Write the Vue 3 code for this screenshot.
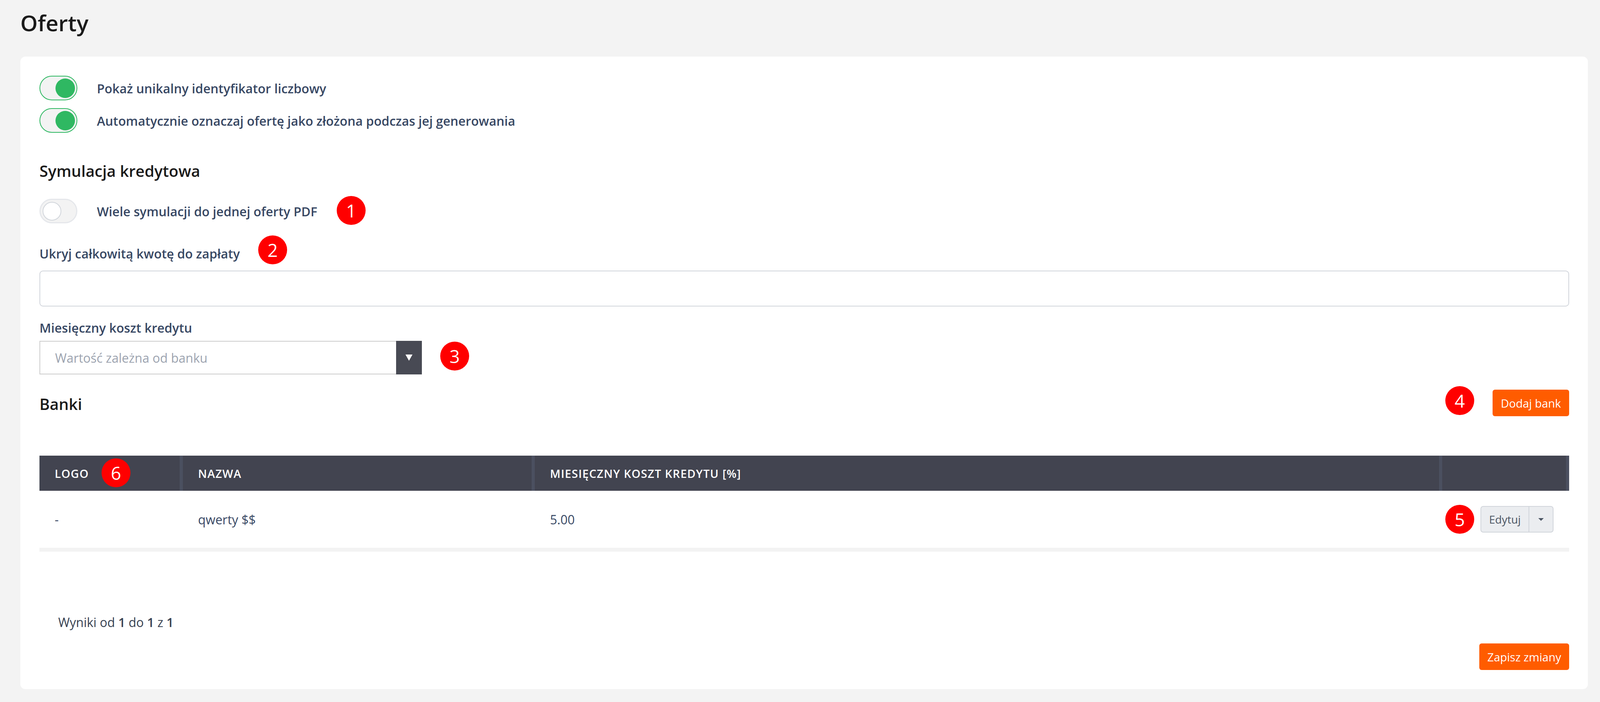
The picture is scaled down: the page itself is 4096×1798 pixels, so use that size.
<script setup>
const toggles = [
  { id: 1, label: 'Pokaż unikalny identyfikator liczbowy' },
  { id: 2, label: 'Automatycznie oznaczaj ofertę jako złożona podczas jej generowania' },
]
const badges = [1, 2, 3, 4, 5, 6]
</script>

<template>
  <div class="page">
    <header class="head"><h1>Oferty</h1></header>
    <main class="card">
      <div class="toggles">
        <div v-for="t in toggles" :key="t.id" class="row">
          <span class="toggle on"><i></i></span>
          <span class="label">{{ t.label }}</span>
        </div>
      </div>
      <h2 class="sim">Symulacja kredytowa</h2>
      <div class="row">
        <span class="toggle off"><i></i></span>
        <span class="label">Wiele symulacji do jednej oferty PDF</span>
      </div>
      <div class="label field-a">Ukryj całkowitą kwotę do zapłaty</div>
      <div class="input"></div>
      <div class="label field-b">Miesięczny koszt kredytu</div>
      <div class="select">
        <span class="placeholder">Wartość zależna od banku</span>
        <span class="handle"><i></i></span>
      </div>
      <div class="banks">
        <h2>Banki</h2>
        <button class="btn">Dodaj bank</button>
      </div>
      <div class="table">
        <div class="th">Logo</div>
        <div class="th">Nazwa</div>
        <div class="th">Miesięczny koszt kredytu [%]</div>
        <div class="th"></div>
        <div class="td">-</div>
        <div class="td">qwerty $$</div>
        <div class="td">5.00</div>
        <div class="td actions">
          <div class="group">
            <span class="edit">Edytuj</span>
            <span class="more"><i></i></span>
          </div>
        </div>
      </div>
      <div class="results">Wyniki od <b>1</b> do <b>1</b> z <b>1</b></div>
      <div class="foot"><button class="btn save">Zapisz zmiany</button></div>
      <span v-for="n in badges" :key="n" class="badge" :class="'b' + n">{{ n }}</span>
    </main>
  </div>
</template>

<style>
html, body { margin: 0; background: #f3f3f3; }
</style>

<style scoped>
.page {
  box-sizing: border-box;
  height: 1798px;
  padding: 0 31px 33px 52px;
  background: #f3f3f3;
  font-family: "Open Sans", "Noto Sans", sans-serif;
  color: #374151;
}
.head { height: 145px; display: flex; align-items: flex-start; }
h1 { margin: 23px 0 0; font-size: 56.5px; line-height: 72px; font-weight: 600; color: #1a1a1a; }
.card {
  position: relative;
  box-sizing: border-box;
  height: 1620px;
  padding: 49px 48px 49px 49px;
  background: #fff;
  border-radius: 13px;
}
.toggles { display: flex; flex-direction: column; gap: 20px; }
.row { display: flex; align-items: center; height: 63px; }
.toggle {
  position: relative;
  box-sizing: border-box;
  width: 97px;
  height: 63px;
  margin-right: 50px;
  border-radius: 32px;
  background: #f3f3f3;
  flex: none;
}
.toggle i { position: absolute; border-radius: 50%; }
.toggle.on { border: 2px solid #2fb862; }
.toggle.on i { width: 50px; height: 50px; right: 4px; top: 5px; background: #2fb862; }
.toggle.off { border: 3px solid #e5e7eb; }
.toggle.off i { box-sizing: border-box; width: 48px; height: 48px; left: 5px; top: 5px; background: #fff; border: 2px solid #d1d5db; }
.label { font-size: 32.3px; line-height: 50px; font-weight: 600; color: #374763; }
h2 { margin: 0; font-size: 40px; line-height: 52px; font-weight: 600; color: #1a1a1a; }
.sim { margin: 72px 0 45px; }
.field-a { margin: 52px 0 19px; }
.field-b { margin: 29px 0 9px; }
.input {
  box-sizing: border-box;
  height: 92px;
  border: 2px solid #d1d5db;
  border-radius: 9px;
}
.select {
  box-sizing: border-box;
  display: flex;
  align-items: center;
  width: 979px;
  height: 86px;
  padding-left: 38px;
  border: 2px solid #ccc;
  border-right: 0;
  position: relative;
}
.placeholder { font-size: 32px; color: #9ca3af; }
.handle {
  position: absolute;
  right: 0;
  top: -2px;
  bottom: -2px;
  width: 66px;
  background: #484a54;
  display: flex;
  align-items: center;
  justify-content: center;
}
.handle i {
  width: 0;
  height: 0;
  border-left: 9px solid transparent;
  border-right: 9px solid transparent;
  border-top: 16px solid #fff;
}
.banks { display: flex; justify-content: space-between; align-items: flex-start; margin-top: 39px; }
.banks h2 { margin-top: 11px; }
.btn {
  height: 68px;
  padding: 0;
  width: 196px;
  border: 0;
  border-radius: 6px;
  background: #ff5c00;
  color: #fff;
  font-family: inherit;
  font-size: 29px;
  font-weight: 400;
}
.table {
  display: grid;
  grid-template-columns: 367px 901px 2323px 325px;
  margin-top: 101px;
  border-bottom: 10px solid #f3f3f3;
}
.th {
  box-sizing: border-box;
  height: 90px;
  display: flex;
  align-items: center;
  padding-left: 39px;
  background: #424450;
  border-right: 8px solid #4b5060;
  color: #fff;
  font-size: 29px;
  font-weight: 600;
  text-transform: uppercase;
  letter-spacing: 1.25px;
}
.td {
  box-sizing: border-box;
  height: 146px;
  display: flex;
  align-items: center;
  padding-left: 39px;
  font-size: 32px;
  color: #374763;
}
.actions { justify-content: flex-end; padding: 0 40px 0 0; }
.group {
  box-sizing: border-box;
  display: flex;
  width: 187px;
  height: 68px;
  background: #ebedf0;
  border: 2px solid #d1d5db;
  border-radius: 7px;
}
.edit {
  width: 121px;
  display: flex;
  align-items: center;
  justify-content: center;
  font-size: 28px;
  color: #4b5563;
  border-right: 2px solid #d1d5db;
}
.more { flex: 1; display: flex; align-items: center; justify-content: center; }
.more i {
  width: 0;
  height: 0;
  border-left: 7px solid transparent;
  border-right: 7px solid transparent;
  border-top: 7px solid #4b5563;
}
.results { margin: 156px 0 0 48px; font-size: 32px; line-height: 50px; color: #374151; }
.results b { font-weight: 600; }
.foot { display: flex; justify-content: flex-end; margin-top: 29px; }
.save { width: 230px; }
.badge {
  position: absolute;
  width: 74px;
  height: 74px;
  border-radius: 50%;
  background: #f00;
  color: #fff;
  font-size: 46px;
  line-height: 74px;
  text-align: center;
}
.b1 { left: 810px; top: 357px; }
.b2 { left: 609px; top: 458px; }
.b3 { left: 1075px; top: 730px; }
.b4 { left: 3648px; top: 844px; }
.b5 { left: 3648px; top: 1148px; }
.b6 { left: 208px; top: 1029px; }
</style>
